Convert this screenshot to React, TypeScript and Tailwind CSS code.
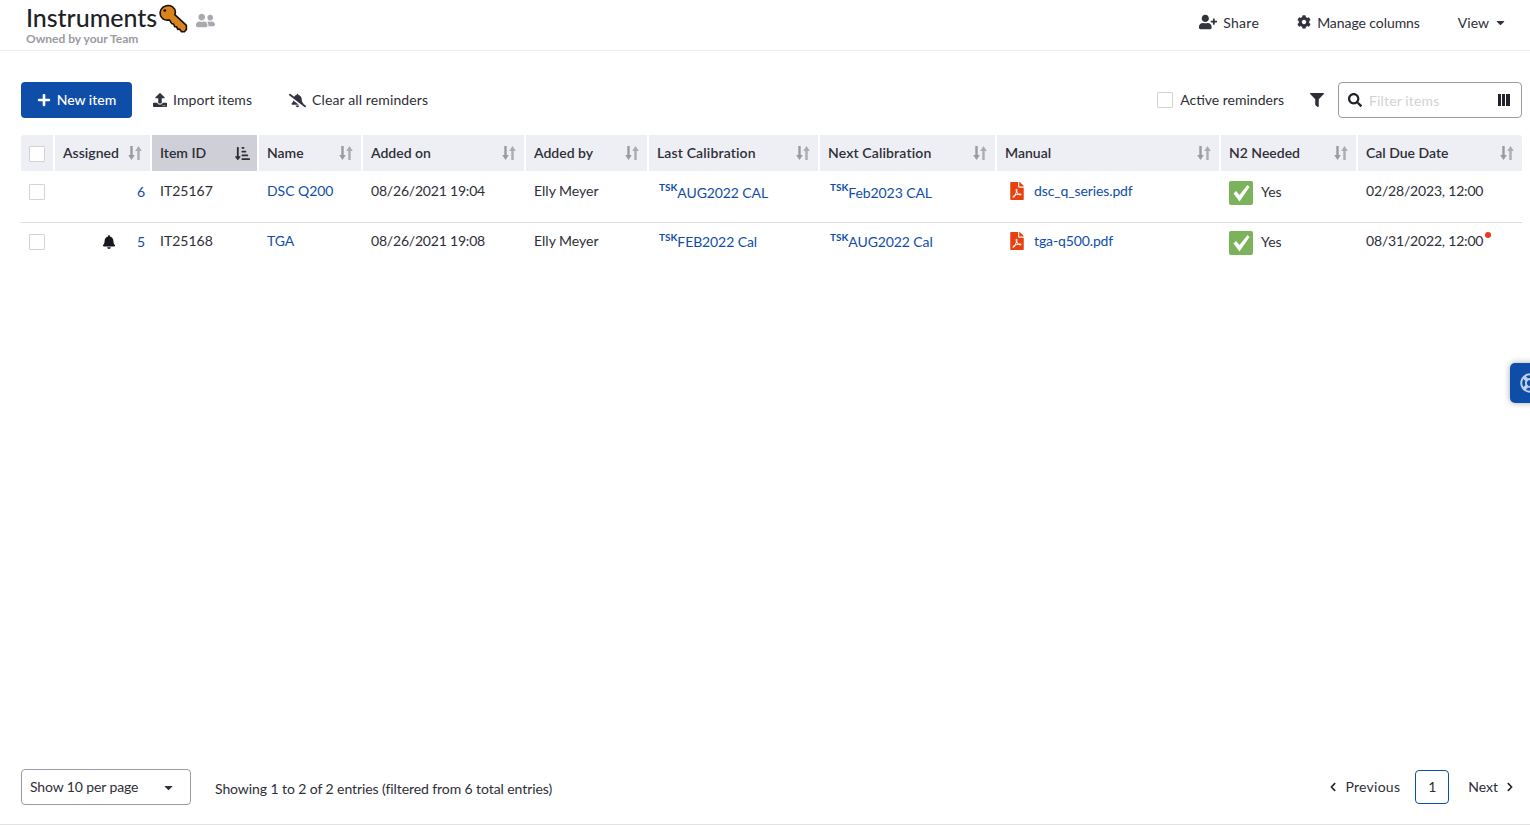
import React from "react";
import {
  FaUserPlus, FaCog, FaFilter, FaSearch, FaPlus, FaUpload, FaBellSlash, FaBell,
  FaFilePdf, FaChevronLeft, FaChevronRight, FaUserFriends, FaRegLifeRing, FaCaretDown,
  FaSortAmountDownAlt,
} from "react-icons/fa";

const Check = ({ className = "" }: { className?: string }) => (
  <span className={`block w-4 h-4 bg-white border border-[#d3d3d6] rounded-[1px] ${className}`} />
);

const Key = () => (
  <svg width="29" height="29" viewBox="0 0 29 29" className="shrink-0">
    <path
      d="M2 5.5 C4 1.5 10 .4 13.5 2.8 C16.2 4.8 16.8 8 15.8 10.6 L27.4 21.4 L27.4 25.4 L25.4 27.8 L22.6 27.8 L20.4 25 L18.8 25.4 L17.6 22.8 L15.6 22.6 L14.8 20.2 L12.8 19.6 L10.4 16 C6.5 16.6 3 15 1.6 11.8 C.9 9.6 1 7.4 2 5.5 Z"
      fill="#d9841a" stroke="#161009" strokeWidth="1.6" strokeLinejoin="round"
    />
    <circle cx="5.8" cy="6.6" r="1.4" fill="#161009" />
  </svg>
);

const SortIdle = () => (
  <svg width="14" height="14" viewBox="0 0 14 14" className="shrink-0">
    <path d="M2.3 0 H4.7 V9 H6.8 L3.5 14 L.2 9 H2.3 Z" fill="#9a9aa0" />
    <path d="M9.3 14 H11.7 V5 H13.8 L10.5 0 L7.2 5 H9.3 Z" fill="#ababb0" />
  </svg>
);

const columns: { label: string; w: string; active?: boolean; wide?: boolean }[] = [
  { label: "Assigned", w: "w-[95px]" },
  { label: "Item ID", w: "w-[105px]", active: true },
  { label: "Name", w: "w-[102px]" },
  { label: "Added on", w: "w-[161px]" },
  { label: "Added by", w: "w-[121px]" },
  { label: "Last Calibration", w: "w-[169px]", wide: true },
  { label: "Next Calibration", w: "w-[175px]", wide: true },
  { label: "Manual", w: "w-[222px]" },
  { label: "N2 Needed", w: "w-[135px]" },
  { label: "Cal Due Date", w: "w-[164px]" },
];

const rows = [
  { count: "6", bell: false, id: "IT25167", name: "DSC Q200", on: "08/26/2021 19:04", last: "AUG2022 CAL", next: "Feb2023 CAL", file: "dsc_q_series.pdf", due: "02/28/2023, 12:00", dot: false },
  { count: "5", bell: true, id: "IT25168", name: "TGA", on: "08/26/2021 19:08", last: "FEB2022 Cal", next: "AUG2022 Cal", file: "tga-q500.pdf", due: "08/31/2022, 12:00", dot: true },
];

const Task = ({ text, w, second }: { text: string; w: string; second: boolean }) => (
  <div className={`${w} pl-[10px] pt-[9px] text-[#0f4ea8] whitespace-nowrap`}>
    <sup className="text-[10px] font-bold top-[-5px] relative align-baseline leading-none">TSK</sup>
    <span className={`relative tracking-[-0.1px] ${second ? "top-[1px]" : "top-[2px]"}`}>{text}</span>
  </div>
);

export default function App() {
  return (
    <div className="relative h-[826px] w-[1530px] overflow-hidden bg-white flex flex-col text-[14px] text-[#2e2e38] font-['Lato',sans-serif]">
      {/* Title bar */}
      <header className="h-[51px] shrink-0 border-b border-[#eeeff4] flex items-start justify-between pl-[26px] pr-[23px]">
        <div className="flex flex-col">
          <div className="flex items-center h-[33px]">
            <span className="text-[25px] leading-[34px] font-medium tracking-[-0.05px] text-[#1f1f28]">Instruments</span>
            <span className="relative top-[2px] left-[2px]"><Key /></span>
            <FaUserFriends className="text-[#a9a9b0] text-[19px] ml-[10px] relative top-[4px]" />
          </div>
          <span className="text-[12px] leading-[14px] font-bold text-[#9a9aa2] mt-[-1px]">Owned by your Team</span>
        </div>
        <div className="flex items-center h-[44px]">
          <FaUserPlus className="text-[18px] text-[#33333f]" />
          <span className="ml-[6px] tracking-[0.3px]">Share</span>
          <FaCog className="text-[14px] text-[#33333f] ml-[38px]" />
          <span className="ml-[6px] tracking-[-0.07px]">Manage columns</span>
          <span className="ml-[38px]">View</span>
          <FaCaretDown className="ml-[5px] text-[13px] text-[#33333f]" />
        </div>
      </header>

      {/* Toolbar */}
      <div className="flex items-center justify-between ml-[21px] mr-[8px] mt-[31px] h-[36px] shrink-0">
        <div className="flex items-center">
          <button className="w-[111px] h-[36px] bg-[#0f4ea8] rounded-[4px] text-white flex items-center justify-center font-medium">
            <FaPlus className="text-[14px] mr-[6px]" /><span className="pb-[2px]">New item</span>
          </button>
          <FaUpload className="ml-[21px] text-[14px] text-[#33333f]" />
          <span className="ml-[6px] pb-[2px] tracking-[0.08px]">Import items</span>
          <FaBellSlash className="ml-[37px] text-[17px] text-[#33333f]" />
          <span className="ml-[6px] pb-[2px] tracking-[0.12px]">Clear all reminders</span>
        </div>
        <div className="flex items-center">
          <Check />
          <span className="ml-[7px] pb-[2px]">Active reminders</span>
          <FaFilter className="ml-[26px] text-[14px] text-[#2e2e38]" />
          <div className="ml-[14px] w-[184px] h-[36px] border border-[#9b9ba3] rounded-[4px] flex items-center pl-[9px] pr-[11px]">
            <FaSearch className="text-[14px] text-[#22222c]" />
            <span className="ml-[7px] text-[#d2d2d6] flex-1 tracking-[0.15px]">Filter items</span>
            <span className="flex gap-[1px] h-[12px]">
              <span className="w-[3px] bg-[#22222c]" />
              <span className="w-[3px] bg-[#22222c]" />
              <span className="w-[4px] bg-[#22222c]" />
            </span>
          </div>
        </div>
      </div>

      {/* Table */}
      <div className="ml-[21px] w-[1501px] mt-[17px] shrink-0">
        <div className="flex gap-[2px] h-[36px]">
          <div className="w-[32px] bg-[#eeeff4] flex items-center justify-center rounded-tl-[3px]">
            <Check className="relative top-[1px]" />
          </div>
          {columns.map((c) => (
            <div
              key={c.label}
              className={`${c.w} ${c.active ? "bg-[#cfcfd7]" : "bg-[#eeeff4]"} flex items-center justify-between pl-[8px] pr-[8px] font-semibold text-[#2e2e38] last:rounded-tr-[3px]`}
            >
              <span className={`pb-[2px] ${c.wide ? "tracking-[0.14px]" : ""}`}>{c.label}</span>
              {c.active ? <FaSortAmountDownAlt className="text-[15px] text-[#2e2e38] mr-[-1px]" /> : <SortIdle />}
            </div>
          ))}
        </div>
        {rows.map((r, i) => (
          <div key={r.id} className={`h-[52px] ${i === 0 ? "border-b border-[#dcdcdf]" : ""}`}>
            <div className={`flex ${i === 1 ? "-mt-[2px]" : ""}`}>
              <div className="w-[34px] pl-[8px] pt-[13px]"><Check /></div>
              <div className="w-[97px] flex justify-end pr-[7px] pt-[9px] text-[#0f4ea8]">
                {r.bell && <FaBell className="text-[#17171d] text-[14px] mr-[21px] mt-[5px]" />}
                <span className="relative top-[1px]">{r.count}</span>
              </div>
              <div className="w-[107px] pl-[8px] pt-[9px]">{r.id}</div>
              <div className="w-[104px] pl-[8px] pt-[9px] text-[#0f4ea8] tracking-[-0.05px]">{r.name}</div>
              <div className="w-[163px] pl-[8px] pt-[9px] tracking-[-0.2px]">{r.on}</div>
              <div className="w-[123px] pl-[8px] pt-[9px]">Elly Meyer</div>
              <Task text={r.last} w="w-[171px]" second={i === 1} />
              <Task text={r.next} w="w-[177px]" second={i === 1} />
              <div className="w-[224px] pl-[11px] pt-[11px] flex items-start text-[#0f4ea8]">
                <FaFilePdf className="text-[#e8410f] text-[18px]" />
                <span className="ml-[8px] -mt-[2px] tracking-[-0.12px]">{r.file}</span>
              </div>
              <div className="w-[137px] pl-[8px] pt-[10px] flex items-start">
                <span className="w-[24px] h-[24px] rounded-[2px] bg-[#7cb25b] flex items-center justify-center">
                  <svg width="24" height="24" viewBox="0 0 24 24">
                    <path d="M4.5 12.5 L7 10 L10.5 14 L18.5 4 L20.5 6 L10.5 20.5 Z" fill="#fff" />
                  </svg>
                </span>
                <span className="ml-[8px] text-[#2e2e38]">Yes</span>
              </div>
              <div className="w-[164px] pl-[8px] pt-[9px] flex items-start">
                <span className="tracking-[-0.18px]">{r.due}</span>
                {r.dot && <span className="w-[6px] h-[6px] rounded-full bg-[#ea3a16] ml-[2px] mt-[2px]" />}
              </div>
            </div>
          </div>
        ))}
      </div>

      {/* Footer */}
      <footer className="mt-auto mb-[1px] h-[56px] shrink-0 border-b border-[#e2e2e5] flex items-start justify-between pl-[21px] pr-[15px]">
        <div className="flex items-center">
          <div className="w-[170px] h-[36px] border border-[#9b9ba3] rounded-[4px] flex items-center justify-between pl-[8px] pr-[15px]">
            <span className="relative top-[-1px] tracking-[-0.12px]">Show 10 per page</span>
            <FaCaretDown className="text-[13px] text-[#33333f]" />
          </div>
          <span className="ml-[24px] relative top-[1px] tracking-[-0.085px]">Showing 1 to 2 of 2 entries (filtered from 6 total entries)</span>
        </div>
        <div className="flex items-center h-[35px]">
          <FaChevronLeft className="text-[10px] text-[#22222c]" />
          <span className="ml-[8px] tracking-[0.25px]">Previous</span>
          <span className="ml-[15px] w-[34px] h-[34px] rounded-[4px] border border-[#0f4ea8] flex items-center justify-center">1</span>
          <span className="ml-[19px]">Next</span>
          <FaChevronRight className="ml-[7px] text-[10px] text-[#22222c]" />
        </div>
      </footer>

      {/* Floating help tab */}
      <div className="absolute left-[1510px] top-[363px] w-[30px] h-[40px] rounded-l-[5px] bg-[#0f4ea8] shadow-[0_0_6px_rgba(0,0,0,0.35)] flex items-center pl-[10px]">
        <FaRegLifeRing className="text-[#bcd0ee] text-[20px] shrink-0" />
      </div>
    </div>
  );
}
